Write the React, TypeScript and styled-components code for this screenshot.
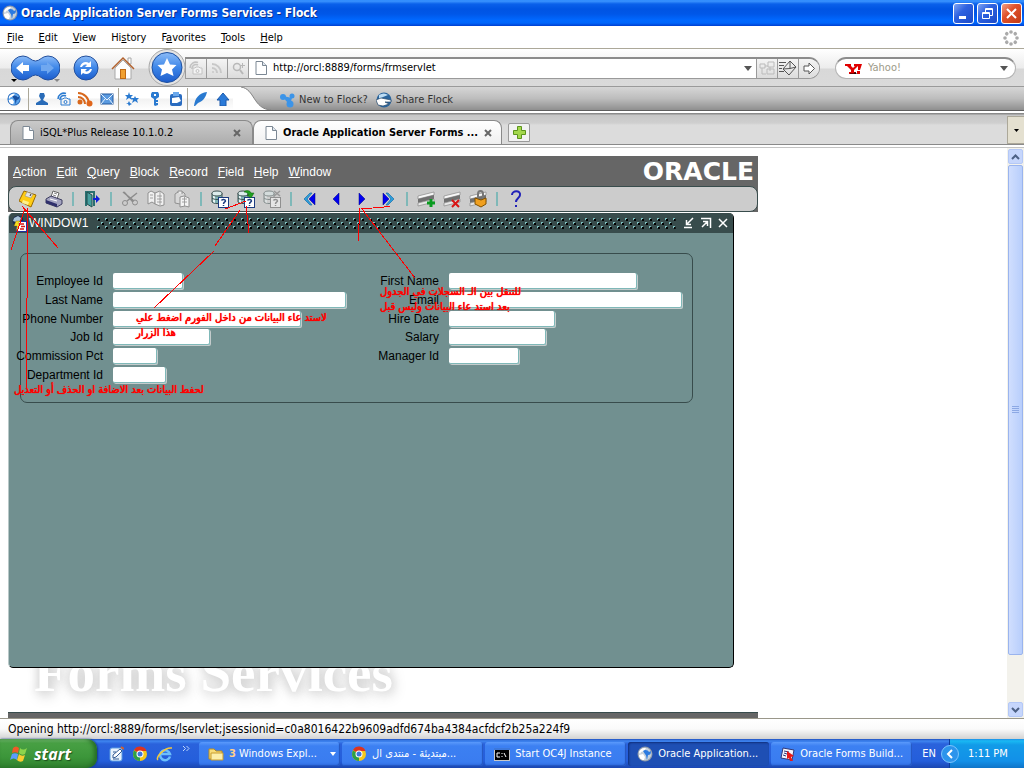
import React from "react";
import styled, { createGlobalStyle } from "styled-components";

const ui = `"DejaVu Sans Condensed", "DejaVu Sans", sans-serif`;
const forms = `"Liberation Sans", Arial, sans-serif`;

const Global = createGlobalStyle`
  * { box-sizing: border-box; }
  body { margin: 0; background: #fff; font: 11px/14px ${ui}; color: #000; }
  button, input { font: inherit; color: inherit; margin: 0; padding: 0; border: 0; background: none; border-radius: 0; outline: none; }
  a { color: inherit; text-decoration: none; }
  svg { display: block; flex: none; }
`;

const Screen = styled.div`
  display: flex;
  flex-direction: column;
  height: 100vh;
  min-height: 700px;
  overflow: hidden;
`;

/* ---------- browser chrome ---------- */

const TitleBar = styled.header`
  flex: none;
  height: 26px;
  display: flex;
  align-items: center;
  gap: 3px;
  padding: 0 2px;
  background: linear-gradient(#2a86fb 0, #3c95ff 1px, #0a60ea 4px, #0054e3 9px, #0057e8 14px, #0068ff 20px, #0066fb 23px, #003fd0 26px);
`;

const Title = styled.h1`
  flex: 1;
  margin: 0;
  font: bold 12px/16px ${ui};
  color: #fff;
  text-shadow: 1px 1px 0 #0b2f8a;
`;

const CaptionButton = styled.button<{ $close?: boolean }>`
  width: 21px;
  height: 21px;
  display: grid;
  place-items: center;
  border: 1px solid #fff;
  border-radius: 3px;
  background: ${(p) =>
    p.$close
      ? "linear-gradient(135deg, #f0a088, #e0522c 40%, #c23a14)"
      : "linear-gradient(135deg, #7fa4f4, #2f62e0 40%, #1c4ac8)"};
`;

const MenuBar = styled.nav`
  flex: none;
  height: 23px;
  display: flex;
  align-items: center;
  gap: 15px;
  padding: 1px 5px 0 7px;
  border-bottom: 1px solid #aca899;
`;

const MenuItem = styled.button`
  &::first-letter { text-decoration: underline; }
`;

const Spacer = styled.div`
  flex: 1;
`;

const NavBar = styled.div`
  flex: none;
  height: 38px;
  display: flex;
  align-items: center;
  padding: 0 8px 0 11px;
  border-bottom: 1px solid #9a9a9a;
  background: linear-gradient(#fff 0, #ececec 19px, #d8d8d8 20px, #dadada 100%);
`;

const RoundButton = styled.button<{ $before?: number }>`
  flex: none;
  margin-left: ${(p) => p.$before ?? 0}px;
  position: relative;
`;

const AddressBox = styled.div`
  flex: 1;
  min-width: 0;
  height: 22px;
  display: flex;
  align-items: stretch;
  margin-left: -2px;
  border: 1px solid #9a9a9a;
  border-top: 2px solid #8c8c8c;
  border-left: 0;
  border-radius: 0 11px 11px 0;
  background: #fff;
  overflow: hidden;
`;

const AddressButton = styled.button<{ $dim?: boolean }>`
  flex: none;
  width: 21px;
  display: grid;
  place-items: center;
  background: linear-gradient(#f4f4f4, #dcdcdc);
  border-left: 1px solid #9a9a9a;
  color: ${(p) => (p.$dim ? "#c2c2c2" : "#555")};
`;

const AddressIcon = styled.span`
  flex: none;
  width: 25px;
  display: grid;
  place-items: center;
  border-left: 1px solid #9a9a9a;
`;

const TextBox = styled.input`
  flex: 1;
  min-width: 0;
  &::placeholder { color: #9d9a88; opacity: 1; }
`;

const DropButton = styled.button`
  width: 17px;
  display: grid;
  place-items: center;
`;

const SearchBox = styled.div`
  flex: none;
  width: 181px;
  height: 22px;
  display: flex;
  align-items: center;
  gap: 6px;
  margin-left: 15px;
  padding: 0 3px 0 9px;
  border: 1px solid #b4b4b4;
  border-top: 2px solid #8c8c8c;
  border-radius: 11px;
  background: #fff;
`;

const ShelfBar = styled.div`
  flex: none;
  height: 24px;
  display: flex;
  align-items: stretch;
  border-bottom: 1px solid #5e5e5e;
  background: linear-gradient(#d6d6d6, #bdbdbd 50%, #8f8f8f);
`;

const ShelfIcons = styled.div`
  display: flex;
  align-items: center;
  background: linear-gradient(#fff 0, #fff 11px, #f2f2f2 12px, #fff 100%);
`;

const ShelfButton = styled.button<{ $w: number }>`
  width: ${(p) => p.$w}px;
  display: grid;
  place-items: center;
`;

const ShelfRule = styled.span`
  width: 1px;
  height: 22px;
  background: #aca899;
`;

const ShelfLink = styled.a`
  display: flex;
  align-items: center;
  gap: 4px;
  margin-left: 8px;
  padding-top: 3px;
  color: #333;
`;

const TabStrip = styled.div`
  flex: none;
  height: 34px;
  display: flex;
  align-items: flex-end;
  padding-left: 10px;
  border-top: 2px solid #fff;
  border-bottom: 1px solid #8a8a8a;
  background: linear-gradient(#8a8a8a 0, #8a8a8a 1px, #c6c6c6 2px, #cfcfcf 10px, #dcdcdc 12px, #dcdcdc 100%);
`;

const Tab = styled.button<{ $active?: boolean }>`
  width: ${(p) => (p.$active ? 249 : 243)}px;
  height: 24px;
  display: flex;
  align-items: center;
  gap: 6px;
  padding: 0 11px;
  border: 1px solid #8a8a8a;
  border-bottom: 0;
  border-radius: 8px 8px 0 0;
  font-weight: ${(p) => (p.$active ? "bold" : "normal")};
  background: ${(p) => (p.$active ? "linear-gradient(#fff, #f0f0f0)" : "linear-gradient(#c9c9c9, #adadad)")};
`;

const TabLabel = styled.span`
  flex: 1;
  text-align: left;
  white-space: nowrap;
`;

const NewTab = styled.button`
  align-self: center;
  width: 22px;
  height: 19px;
  margin: 7px 0 0 6px;
  display: grid;
  place-items: center;
  border: 1px solid #9a9a9a;
  border-radius: 2px 2px 0 0;
  background: #f2f2f2;
`;

const TabMenu = styled.button`
  width: 17px;
  height: 28px;
  display: grid;
  place-items: center;
  border: 1px solid #aca899;
  border-right: 0;
  background: #e4e0d0;
`;

/* ---------- page area ---------- */

const PageArea = styled.main`
  flex: 1;
  min-height: 0;
  display: flex;
  border-top: 1px solid #c4c4c4;
  margin-top: 2px;
`;

const Page = styled.div`
  flex: 1;
  min-width: 0;
  display: flex;
  padding: 8px 8px 0;
  overflow: hidden;
`;

const Applet = styled.section`
  position: relative;
  flex: 1;
  max-width: 750px;
  display: flex;
  flex-direction: column;
  font: 12px/14px ${forms};
`;

const AppletMenu = styled.nav`
  flex: none;
  height: 30px;
  display: flex;
  align-items: center;
  gap: 10px;
  padding: 1px 4px 0 5px;
  color: #fff;
  background: #666;
`;

const OracleLogo = styled.span`
  font: bold 25px/26px "DejaVu Sans", sans-serif;
`;

const ToolbarBack = styled.div`
  flex: none;
  background: #666;
`;

const Toolbar = styled.div`
  height: 26px;
  display: flex;
  align-items: center;
  padding-left: 6px;
  border: 1px solid #384c4c;
  border-radius: 8px;
  background: #ccc;
`;

const ToolButton = styled.button`
  flex: none;
  width: 26px;
  height: 22px;
  display: grid;
  place-items: center;
`;

const ToolRule = styled.span`
  flex: none;
  width: 2px;
  height: 14px;
  margin: 0 5px;
  background: #7fb8b8;
`;

const FormWindow = styled.section`
  flex: 1;
  min-height: 0;
  display: flex;
  flex-direction: column;
  margin: 1px 24px 0 0;
  border: solid #000;
  border-width: 0 1px 1px 0;
  border-left: 1px solid #b8c8c8;
  border-radius: 5px;
  background: #719090;
  overflow: hidden;
`;

const WindowTitle = styled.div`
  flex: none;
  height: 20px;
  display: flex;
  align-items: center;
  gap: 2px;
  padding: 0 3px;
  color: #fff;
  background: #384c4c;
`;

const WindowName = styled.h2`
  margin: 0 6px 0 0;
  font: 12px/14px ${forms};
`;

const Grip = styled.svg`
  flex: 1;
  min-width: 0;
  height: 12px;
  margin-right: 3px;
`;

const WindowButton = styled.button`
  width: 15px;
  display: grid;
  place-items: center;
`;

const Record = styled.form`
  margin: 20px 40px 0 11px;
  height: 150px;
  display: flex;
  align-items: flex-start;
  gap: 12px;
  padding: 18px 0 0;
  border: 1px solid #384c4c;
  border-radius: 7px;
`;

const FieldColumn = styled.div<{ $label: number }>`
  height: 112px;
  display: grid;
  grid-template-columns: ${(p) => p.$label}px 233px;
  grid-template-rows: repeat(6, 1fr);
  column-gap: 10px;
  align-items: center;
`;

const FieldLabel = styled.label`
  justify-self: end;
  white-space: nowrap;
`;

const Field = styled.input<{ $w: number }>`
  width: ${(p) => p.$w}px;
  height: 16px;
  padding: 0 3px;
  background: #fff;
  border: solid #7fb8b8;
  border-width: 0 1px 1px 0;
  border-radius: 2px;
  box-shadow: 1px 1px 0 #c4cccc;
`;

const Brand = styled.div`
  flex: none;
  height: 44px;
  display: flex;
  align-items: flex-end;
  padding: 0 0 11px 26px;
  overflow: hidden;
  font: bold 55px/56px "Liberation Serif", serif;
  color: #fff;
  text-shadow: 0 0 10px #d4d4d4, 2px 4px 14px #c8c8c8;
`;

const AppletFoot = styled.div`
  flex: none;
  height: 6px;
  background: #666;
  border-top: 1px solid #384c4c;
`;

const Lines = styled.svg`
  position: absolute;
  left: 0;
  top: 0;
  pointer-events: none;
`;

const Note = styled.p<{ $x: number; $y: number }>`
  position: absolute;
  left: ${(p) => p.$x}px;
  top: ${(p) => p.$y}px;
  margin: 0;
  direction: rtl;
  white-space: nowrap;
  font: 11px/15px ${ui};
  color: #f00;
  text-shadow: 0 0 0 #f00, 0 0 1px #f00;
`;

const ScrollBar = styled.div`
  flex: none;
  width: 17px;
  display: flex;
  flex-direction: column;
  gap: 1px;
  padding: 1px;
  background: #f3f2ec;
`;

const ScrollButton = styled.button`
  height: 15px;
  display: grid;
  place-items: center;
  border: 1px solid #b4c8f6;
  border-radius: 2px;
  background: #c6d6fc;
`;

const ScrollThumb = styled.div`
  flex: 491;
  display: grid;
  place-items: center;
  border: 1px solid #9ab4ee;
  border-radius: 2px;
  background: linear-gradient(90deg, #d0defe, #b8cefc);
`;

const ScrollTrack = styled.div`
  flex: 45;
`;

const StatusBar = styled.div`
  flex: none;
  height: 21px;
  display: flex;
  align-items: center;
  padding-left: 8px;
  border-top: 1px solid #9a978a;
  background: linear-gradient(#fff, #fafafa 50%, #d2d2d2);
  font-size: 12px;
`;

/* ---------- task bar ---------- */

const TaskBar = styled.footer`
  flex: none;
  height: 29px;
  display: flex;
  align-items: stretch;
  color: #fff;
  background: linear-gradient(#1f4fc0 0, #3f86f0 2px, #2a62dc 5px, #245edb 22px, #1b46b0 29px);
`;

const StartButton = styled.button`
  width: 97px;
  display: flex;
  align-items: center;
  gap: 6px;
  padding-left: 10px;
  border-radius: 0 10px 10px 0;
  background: linear-gradient(#7cc478 0, #48a044 4px, #3c963a 18px, #2f802e 29px);
  box-shadow: inset -3px 0 4px #256b25, 1px 0 2px #14388c;
  font: italic bold 16px/20px "Open Sans", sans-serif;
  text-shadow: 1px 1px 1px #1c4f1c;
`;

const QuickLaunch = styled.div`
  width: 102px;
  display: flex;
  align-items: center;
  gap: 8px;
  padding-left: 11px;
`;

const More = styled.svg`
  align-self: flex-start;
  margin-top: 6px;
`;

const Tasks = styled.div`
  flex: 1;
  min-width: 0;
  display: grid;
  grid-template-columns: repeat(5, 1fr);
  gap: 2px;
  padding: 3px 0 2px;
`;

const Task = styled.button<{ $active?: boolean }>`
  min-width: 0;
  display: flex;
  align-items: center;
  gap: 5px;
  padding: 0 4px 0 9px;
  border-radius: 3px;
  white-space: nowrap;
  background: ${(p) => (p.$active ? "#1e4fb4" : "linear-gradient(#5a9afc, #3c80f2 4px, #3a7cf0 20px, #2f6ce0)")};
  box-shadow: ${(p) => (p.$active ? "inset 1px 1px 2px #102f7c" : "inset -1px -1px 1px #2456c0")};
`;

const TaskText = styled.span`
  flex: 1;
  min-width: 0;
  text-align: left;
  overflow: hidden;
`;

const Count = styled.b`
  color: #ffcf8c;
`;

const Tray = styled.div`
  display: flex;
  align-items: center;
`;

const Language = styled.button`
  padding: 0 5px 0 10px;
`;

const TrayToggle = styled.button`
  position: relative;
  z-index: 1;
`;

const Clock = styled.time`
  align-self: stretch;
  width: 75px;
  display: flex;
  align-items: center;
  padding-left: 18px;
  margin-left: -10px;
  border-left: 1px solid #0c3c9c;
  background: linear-gradient(#1f90e8 0, #19b9f3 2px, #129be8 6px, #1290e8 22px, #0f74c8 29px);
`;

/* ---------- drawings ---------- */

const Globe = ({ s = 16, blue }: { s?: number; blue?: boolean }) => (
  <svg width={s} height={s} viewBox="0 0 16 16">
    <circle cx="8" cy="8" r="7.500" fill={blue ? "#2c6cbc" : "#8c98a8"} />
    <circle cx="8" cy="8" r="6.500" fill={blue ? "#5ca4ec" : "#c4d0dc"} />
    <path d="M2 6C3 3 6 1.500 9 2L7 5L4 6L3 8Z" fill="#fff" />
    <path d="M6 5C8 3 11 4 12 6L14 5C14 8 13 9 11 9L10 14C9 12 10 10 8 8Z" fill={blue ? "#1850a0" : "#2b7ae0"} />
    <path d="M2 9L6 8L8 11L7 14C4 14 2 12 2 9Z" fill="#fff" />
  </svg>
);

const Caret = ({ c = "#555" }: { c?: string }) => (
  <svg width="8" height="5" viewBox="0 0 8 5"><path d="M0 0H8L4 5Z" fill={c} /></svg>
);

const SmallCaret = () => (
  <svg width="6" height="4" viewBox="0 0 6 4"><path d="M0 0H6L3 4Z" fill="#fff" /></svg>
);

const PageIcon = () => (
  <svg width="12" height="14" viewBox="0 0 12 14">
    <path d="M1 .5H7.500L11.500 4.500V13.500H1Z" fill="#fff" stroke="#7c8894" />
    <path d="M7.500 .5V4.500H11.500" fill="#dfe6ee" stroke="#7c8894" />
  </svg>
);

const Cross = () => (
  <svg width="8" height="8" viewBox="0 0 8 8"><path d="M1 1L7 7M7 1L1 7" stroke="#666" strokeWidth="2" /></svg>
);

const BlueDefs = () => (
  <defs>
    <linearGradient id="blue" x1="0" y1="0" x2="0" y2="1">
      <stop offset="0" stopColor="#8cbcf8" />
      <stop offset=".5" stopColor="#3d86e8" />
      <stop offset="1" stopColor="#1c5ccc" />
    </linearGradient>
  </defs>
);

const BackForward = () => (
  <svg width="49" height="30" viewBox="0 0 49 30">
    <BlueDefs />
    <path d="M12 3C18 3 20 8 24.500 8S31 3 37 3A12 12 0 0 1 37 27C31 27 29 22 24.500 22S18 27 12 27A12 12 0 0 1 12 3Z" fill="url(#blue)" stroke="#24509c" />
    <path d="M5 15L12 9V12H18V18H12V21Z" fill="#fff" />
    <path d="M43 15L36 9V12H30V18H36V21Z" fill="#70a8f0" />
    <path d="M0 26H6L3 29Z" fill="#000" /><path d="M43 26H49L46 29Z" fill="#888" />
  </svg>
);

const Reload = () => (
  <svg width="26" height="26" viewBox="0 0 26 26">
    <circle cx="13" cy="13" r="12" fill="url(#blue)" stroke="#24509c" />
    <path d="M7 12C8 7 13 6 16 8L18 6V12H12L14 10C12 9 10 10 9 12ZM19 14C18 19 13 20 10 18L8 20V14H14L12 16C14 17 16 16 17 14Z" fill="#fff" />
  </svg>
);

const Home = () => (
  <svg width="24" height="24" viewBox="0 0 24 24">
    <path d="M17 2H20V8H17Z" fill="#fff" stroke="#a8a8a8" />
    <path d="M4 12L12 4L20 12V23H4Z" fill="#fdfdfd" stroke="#a8a8a8" />
    <path d="M1 13L12 2L23 13" fill="none" stroke="#b0602c" strokeWidth="1.500" />
    <rect x="9.500" y="13.500" width="5" height="9" fill="#f0a030" stroke="#c06a14" />
  </svg>
);

const Star = () => (
  <svg width="40" height="37" viewBox="0 0 40 37">
    <circle cx="20" cy="18.500" r="18" fill="#e4e4e4" stroke="#a8a8a8" />
    <circle cx="20" cy="18.500" r="15" fill="url(#blue)" stroke="#1d4f9f" />
    <path d="M20 9L23 15.500L29.500 16L25 20.500L26.500 27L20 24L13.500 27L15 20.500L10.500 16L17 15.500Z" fill="#fff" />
  </svg>
);

const Feed = ({ c, s = 12 }: { c: string; s?: number }) => (
  <svg width={s} height={s} viewBox="0 0 12 12" fill="none" stroke={c} strokeWidth="2">
    <path d="M1 2A9 9 0 0 1 10 11M1 6A5 5 0 0 1 6 11" /><circle cx="2" cy="10" r="1" fill={c} stroke="none" />
  </svg>
);

const Media = ({ c }: { c: string }) => (
  <svg width="14" height="14" viewBox="0 0 14 14" fill="none" stroke={c}>
    <path d="M1 7A6 6 0 0 1 9 1.500M3 8A4 4 0 0 1 9 4" strokeWidth="1.500" />
    <path d="M4 7H6L7 6H10L11 7H13V13H4Z" fill="#f4f4f4" /><circle cx="8.500" cy="10" r="1.500" />
  </svg>
);

const Yahoo = () => (
  <svg width="17" height="11" viewBox="0 0 17 11">
    <path d="M0 1H6V3L8 5L10 3H9V1H13V3L9 7V9H11V11H4V9H6V7L2 3H0Z" fill="#e00000" />
    <path d="M13 1H17L15 7H13ZM12 8H15V11H12Z" fill="#e00000" /><path d="M9 10H11V11H5" stroke="#000" fill="none" />
  </svg>
);

const Throbber = () => (
  <svg width="16" height="16" viewBox="0 0 16 16" fill="#aaa">
    {[0, 45, 90, 135, 180, 225, 270, 315].map((a) => (
      <circle key={a} cx="8" cy="2" r="1.800" transform={`rotate(${a} 8 8)`} />
    ))}
  </svg>
);

const shelf: { [k: string]: React.ReactNode } = {
  person: <path d="M5 1H9L10 4L8 8L13 11V13H1V11L6 8L4 4Z" fill="#2a6cb8" />,
  mail: <g><rect x="1" y="2" width="12" height="10" fill="#5a9ae0" stroke="#24589c" /><path d="M1 2L7 8L13 2M1 12L5 7M13 12L9 7" fill="none" stroke="#e8f2fc" /></g>,
  stars: <path d="M4 0L5 3L8 3L6 5L7 8L4 6L1 8L2 5L0 3H3ZM10 4L11 6H14L12 8L13 11L10 9L7 11L8 8L6 6H9ZM4 9L5 11L7 12L5 13L4 14L3 12L1 11H3Z" fill="#2a7ad0" />,
  key: <path d="M4 0H10L11 2V5L8 7V8H10V10H8V11H10V13L7 14L6 13V7L3 5V2ZM6 2V4H8V2Z" fill="#2a7ad0" fillRule="evenodd" />,
  clip: <g><rect x="1" y="2" width="12" height="12" rx="2" fill="#2a6cc0" /><rect x="4" y="0" width="6" height="4" fill="#6aa8ec" /><path d="M3 6L10 5L12 9L8 11H3Z" fill="#fff" /></g>,
  quill: <path d="M1 14C2 6 6 1 14 0C13 4 11 9 5 11L2 14Z" fill="#2a7ad0" />,
  up: <path d="M7 1L13 8H10V14H4V8H1Z" fill="#2a7ad8" stroke="#1c5aac" />,
};

const Shelf = ({ name }: { name: string }) => (
  <svg width="14" height="14" viewBox="0 0 14 14">{shelf[name]}</svg>
);

const FeedBig = () => (
  <svg width="16" height="16" viewBox="0 0 16 16" fill="none" stroke="#d8681c" strokeWidth="2">
    <path d="M1 2A11 11 0 0 1 12 13M1 6A7 7 0 0 1 8 13" /><circle cx="3" cy="11" r="1.500" fill="#d8681c" /><circle cx="12.500" cy="12.500" r="3" fill="#e0661c" stroke="none" />
  </svg>
);

const database = (c: string) => (
  <g>
    <path d="M1 3V12C3 14 9 14 11 12V3" fill={c} stroke="#3c5050" />
    <path d="M2 5V12L4 13V6Z" fill="#e8f4f4" />
    <ellipse cx="6" cy="3.500" rx="5" ry="2.500" fill="#dcecec" stroke="#3c5050" />
    <path d="M1 8C3 10 9 10 11 8" fill="none" stroke="#3c5050" />
  </g>
);
const ask = (c: string) => (
  <g>
    <rect x="7.500" y="7.500" width="10" height="10" fill="#fff" stroke={c} />
    <path d="M10.500 10.500C11 9 14.500 9 14.500 11C14.500 12 12.500 12 12.500 14M12.500 15V16" fill="none" stroke={c} strokeWidth="1.500" />
  </g>
);
const rows = (
  <g>
    <path d="M1 6L17 2V5L1 9Z" fill="#f8f8f8" stroke="#888" strokeWidth=".7" />
    <path d="M1 9L17 5V9L1 13Z" fill="#707070" /><path d="M1 13L17 9V12L1 16Z" fill="#e8e8e8" stroke="#888" strokeWidth=".7" />
  </g>
);

const tools: { [k: string]: React.ReactNode } = {
  Save: <g><path d="M5 1L17 5L12 17L0 11Z" fill="#ffcc14" stroke="#9a6a00" /><path d="M8 2L14 4L12 8L6 6Z" fill="#e4e4e4" stroke="#888" strokeWidth=".5" /><path d="M12 4L11 6" stroke="#333" /><path d="M4 10L10 12L9 15L3 13Z" fill="#fff08c" /></g>,
  Print: <g><path d="M8 1L14 3L12 9L6 7Z" fill="#fff" stroke="#666" /><path d="M9 3L12 4M8 5L11 6" stroke="#888" /><path d="M1 9L6 6L17 10V14L12 17L1 13Z" fill="#a4a4c0" stroke="#3c3c60" /><path d="M1 10L12 14V17L1 13Z" fill="#30306c" /><path d="M5 9L12 11" stroke="#fff" /></g>,
  Exit: <g><path d="M2 1H12V16H10V3H4V16H2Z" fill="#2a7070" /><path d="M4 2L9 5V17L4 14Z" fill="#48a0a0" stroke="#205050" /><path d="M10 8H13V5L17 9L13 13V10H10Z" fill="#1020d8" /></g>,
  Cut: <g fill="none" stroke="#8c8c8c"><path d="M2 2L13 11M3 2L12 12M16 3L6 11" strokeWidth="1.500" /><circle cx="4" cy="13" r="2.500" /><circle cx="14" cy="12.500" r="2.500" /></g>,
  Copy: <g fill="#f0f0f0" stroke="#909090"><path d="M1 3L4 1L8 3V14L5 12L1 14Z" /><path d="M8 3L13 1L17 4V15L13 16L8 14Z" /><path d="M3 5H6M3 8H6M10 6H15M10 9H15M10 12H15M13 2V15" strokeWidth=".8" /></g>,
  Paste: <g fill="#d8d8d8" stroke="#909090"><path d="M2 4L5 2H10L12 4V15L2 13Z" /><path d="M5 3V1H9V4" fill="#eee" /><path d="M7 7L11 6L16 8V17L12 16L7 17Z" fill="#f4f4f4" /><path d="M9 9H14M9 12H14M11.500 7V16" strokeWidth=".8" /></g>,
  "Enter query": <g>{database("#80b4b4")}{ask("#1c3c80")}</g>,
  "Execute query": <g>{database("#80b4b4")}{ask("#1c3c80")}<path d="M7 2C9 0 13 0 14 3H17L14 8L10 5H12C11 3 9 2 7 2Z" fill="#20a020" stroke="#086008" strokeWidth=".5" /></g>,
  "Cancel query": <g opacity=".5">{database("#d0d0d0")}{ask("#555")}<path d="M11 1L17 6M17 1L11 6" stroke="#666" strokeWidth="1.500" /></g>,
  "Previous block": <g><path d="M9 3H11L6 9L11 15H9L3 9Z" fill="#2ca0dc" stroke="#1c6ca8" strokeWidth=".7" /><path d="M14 3V15L8 9Z" fill="#0000f0" stroke="#000080" strokeWidth=".5" /></g>,
  "Previous record": <path d="M12 3V15L6 9Z" fill="#0000f0" stroke="#000080" strokeWidth=".5" />,
  "Next record": <path d="M6 3V15L12 9Z" fill="#0000f0" stroke="#000080" strokeWidth=".5" />,
  "Next block": <g><path d="M7 3H9L15 9L9 15H7L12 9Z" fill="#2ca0dc" stroke="#1c6ca8" strokeWidth=".7" /><path d="M4 3V15L10 9Z" fill="#0000f0" stroke="#000080" strokeWidth=".5" /></g>,
  "Insert record": <g>{rows}<path d="M10 13H18M14 9V17" stroke="#0a9a20" strokeWidth="3" /></g>,
  "Remove record": <g>{rows}<path d="M9 10L16 17M16 10L9 17" stroke="#d81414" strokeWidth="2" /></g>,
  "Lock record": <g>{rows}<path d="M9 9V4C9 0 14 0 14 4V9" fill="none" stroke="#777" strokeWidth="2" /><path d="M6 8L12 10L17 8V14L12 17L6 14Z" fill="#f0a020" stroke="#805000" /></g>,
  Help: <path d="M5 5C5 0 14 0 13 5C13 8 9 8 9 12M9 15V17" fill="none" stroke="#2020b8" strokeWidth="2" />,
};

const toolOrder = [
  "Save", "Print", "|", "Exit", "|", "Cut", "Copy", "Paste", "|", "Enter query", "Execute query", "Cancel query", "|",
  "Previous block", "Previous record", "Next record", "Next block", "|", "Insert record", "Remove record", "Lock record", "|", "Help",
];

const Chrome = () => (
  <svg width="16" height="16" viewBox="0 0 16 16">
    <circle cx="8" cy="8" r="7" fill="#f4c81c" />
    <path d="M8 8L2 4A7 7 0 0 1 14.500 5H8Z" fill="#dc3420" /><path d="M8 8L8 15A7 7 0 0 1 2 4.500Z" fill="#2ca048" />
    <circle cx="8" cy="8" r="3.500" fill="#fff" /><circle cx="8" cy="8" r="2.500" fill="#3c78dc" />
  </svg>
);

const Flag = () => (
  <svg width="18" height="18" viewBox="0 0 18 18">
    <path d="M3 3C5 1 7 1 9 3L8 8C6 7 4 7 2 8Z" fill="#f05a28" /><path d="M10 3C12 5 14 5 17 3L15 9C13 10 11 10 9 8Z" fill="#8cd44c" />
    <path d="M2 9C4 8 6 8 8 9L7 15C5 13 3 13 0 15Z" fill="#5c9cfc" /><path d="M9 9C11 11 13 11 15 10L13 16C11 17 9 17 7 15Z" fill="#f8cc30" />
  </svg>
);

const Desktop = () => (
  <svg width="16" height="16" viewBox="0 0 16 16">
    <rect x="2" y="2" width="12" height="13" rx="2" fill="#e8f2fc" stroke="#5c9ce0" /><path d="M5 9L12 3L14 5L8 11L5 12Z" fill="#fff" stroke="#345c94" /><path d="M5 6H8M5 13H11" stroke="#345c94" /><path d="M13 1L16 3" stroke="#d06030" strokeWidth="2" />
  </svg>
);

const Explorer = () => (
  <svg width="18" height="16" viewBox="0 0 18 16" fill="none">
    <path d="M14 10.500A5 5 0 1 1 14 8H5" stroke="#6cc0fc" strokeWidth="2.500" /><path d="M2 14C-1 12 8 1 16 2" stroke="#f4c83c" strokeWidth="1.500" />
  </svg>
);

const Folder = () => (
  <svg width="16" height="14" viewBox="0 0 16 14"><path d="M1 2H6L8 4H14V12H1Z" fill="#f8dc78" stroke="#b88c20" /><path d="M3 6H15V13H3Z" fill="#fceeaa" stroke="#c89c30" /></svg>
);

const Terminal = () => (
  <svg width="16" height="13" viewBox="0 0 16 13"><path d="M0 0H16V13H0Z" fill="#c8c8c8" /><path d="M0 0H16V2H0Z" fill="#3c78dc" /><path d="M1 2H15V12H1Z" fill="#000" /><path d="M6 5H3V9H6M8 5V6M8 8V9M10 5L12 9" stroke="#fff" fill="none" /></svg>
);

const Builder = () => (
  <svg width="15" height="15" viewBox="0 0 15 15"><path d="M3 1L14 3L12 13L1 11Z" fill="#f4f4fc" stroke="#303878" /><path d="M4 4L9 5M4 6L7 7M3 8L6 9" stroke="#303878" /><path d="M7 4L14 9L11 10L13 14L10 14L9 11L7 12Z" fill="#e81818" /></svg>
);

const Applogo = () => (
  <svg width="15" height="17" viewBox="0 0 15 17">
    <circle cx="6" cy="6" r="5.500" fill="#1c2c50" /><path d="M2 3L6 1L9 3L8 6L4 7L1 6Z" fill="#a8c4d8" />
    <rect x="4.500" y="6.500" width="10" height="10" fill="#fff" stroke="#2030a0" />
    <path d="M8 9H12M9 11.500H13M8 14H12" stroke="#d81414" strokeWidth="1.500" />
    <path d="M4 6L2 11H5L4 16L8 9H6L8 6Z" fill="#f8e020" stroke="#806000" strokeWidth=".4" />
  </svg>
);

const Chevron = ({ down }: { down?: boolean }) => (
  <svg width="9" height="6" viewBox="0 0 9 6"><path d={down ? "M1 1L4.500 4.500L8 1" : "M1 5L4.500 1.500L8 5"} fill="none" stroke="#4d6185" strokeWidth="2" /></svg>
);

/* ---------- data ---------- */

const left: [string, number][] = [
  ["Employee Id", 70], ["Last Name", 233], ["Phone Number", 188], ["Job Id", 97], ["Commission Pct", 44], ["Department Id", 53],
];
const right: [string, number][] = [
  ["First Name", 188], ["Email", 233], ["Hire Date", 106], ["Salary", 97], ["Manager Id", 70],
];

const Fields = ({ items, label }: { items: [string, number][]; label: number }) => (
  <FieldColumn $label={label}>
    {items.map(([name, w]) => (
      <React.Fragment key={name}>
        <FieldLabel htmlFor={name.replace(" ", "-")}>{name}</FieldLabel>
        <Field id={name.replace(" ", "-")} $w={w} />
      </React.Fragment>
    ))}
  </FieldColumn>
);

const Key = ({ text, at = 0 }: { text: string; at?: number }) => (
  <span>{text.slice(0, at)}<u>{text[at]}</u>{text.slice(at + 1)}</span>
);

export default function App() {
  return (
    <Screen>
      <Global />
      <TitleBar>
        <Globe />
        <Title>Oracle Application Server Forms Services - Flock</Title>
        <CaptionButton aria-label="Minimize"><svg width="13" height="13"><path d="M2 9H9V12H2Z" fill="#fff" /></svg></CaptionButton>
        <CaptionButton aria-label="Restore"><svg width="13" height="13" fill="none" stroke="#fff"><path d="M1.500 5.500H8.500V11.500H1.500ZM1 6.500H9M4.500 5V1.500H11.500V8.500H9M4 2.500H12" /></svg></CaptionButton>
        <CaptionButton $close aria-label="Close"><svg width="13" height="13"><path d="M2 2L11 11M11 2L2 11" stroke="#fff" strokeWidth="2" /></svg></CaptionButton>
      </TitleBar>

      <MenuBar>
        <MenuItem>File</MenuItem><MenuItem>Edit</MenuItem><MenuItem>View</MenuItem>
        <button><Key text="History" at={2} /></button>
        <button><Key text="Favorites" at={1} /></button>
        <MenuItem>Tools</MenuItem><MenuItem>Help</MenuItem>
        <Spacer /><Throbber />
      </MenuBar>

      <NavBar>
        <RoundButton aria-label="Back and forward"><BackForward /></RoundButton>
        <RoundButton $before={13} aria-label="Reload"><Reload /></RoundButton>
        <RoundButton $before={12} aria-label="Home"><Home /></RoundButton>
        <RoundButton $before={12} aria-label="Favorite"><Star /></RoundButton>
        <AddressBox>
          <AddressButton $dim aria-label="Media"><Media c="#c2c2c2" /></AddressButton>
          <AddressButton $dim aria-label="Feeds"><Feed c="#c8c8c8" /></AddressButton>
          <AddressButton $dim aria-label="Find"><svg width="13" height="13" fill="none" stroke="#b8b8b8"><circle cx="5" cy="5" r="3.500" strokeWidth="1.500" /><path d="M8 8L11 12" strokeWidth="2" /><path d="M8 3.500H13M10.500 1V6" /></svg></AddressButton>
          <AddressIcon><PageIcon /></AddressIcon>
          <TextBox aria-label="Address" defaultValue="http://orcl:8889/forms/frmservlet" />
          <DropButton aria-label="Address history"><Caret /></DropButton>
          <AddressButton $dim aria-label="Share"><svg width="16" height="15" fill="none" stroke="#bbb"><path d="M1 3H6V7H1ZM9 1H15V6H9ZM3 7V13H7M8 8H15V13H8ZM6 5H9M11 6V10" /></svg></AddressButton>
          <AddressButton aria-label="Mail page"><svg width="18" height="16" fill="none" stroke="#555"><path d="M4 9L11 1L17 7L10 15ZM4 9L11 8.500L11 1M11 8.500L17 7M0 2.500H7M0 5.500H5M0 8.500H3M0 11.500H5" /></svg></AddressButton>
          <AddressButton aria-label="Go"><svg width="13" height="13" fill="#fff" stroke="#555"><path d="M1 4H6V1L11.500 6.500L6 12V9H1Z" /></svg></AddressButton>
        </AddressBox>
        <SearchBox>
          <Yahoo />
          <TextBox aria-label="Search" placeholder="Yahoo!" />
          <DropButton aria-label="Search engines"><Caret /></DropButton>
        </SearchBox>
      </NavBar>

      <ShelfBar>
        <ShelfIcons>
          <ShelfButton $w={28} aria-label="World"><Globe s={14} blue /></ShelfButton><ShelfRule />
          <ShelfButton $w={25} aria-label="People"><Shelf name="person" /></ShelfButton>
          <ShelfButton $w={20} aria-label="Media"><Media c="#2a7ad0" /></ShelfButton>
          <ShelfButton $w={22} aria-label="Feeds"><FeedBig /></ShelfButton>
          <ShelfButton $w={22} aria-label="Mail"><Shelf name="mail" /></ShelfButton><ShelfRule />
          <ShelfButton $w={26} aria-label="Favorites"><Shelf name="stars" /></ShelfButton>
          <ShelfButton $w={20} aria-label="Accounts"><Shelf name="key" /></ShelfButton>
          <ShelfButton $w={22} aria-label="Clipboard"><Shelf name="clip" /></ShelfButton><ShelfRule />
          <ShelfButton $w={24} aria-label="Blog"><Shelf name="quill" /></ShelfButton>
          <ShelfButton $w={21} aria-label="Upload"><Shelf name="up" /></ShelfButton>
        </ShelfIcons>
        <svg width="39" height="23" viewBox="0 0 39 23">
          <path d="M0 0H8C22 2 20 22 38 23H0Z" fill="#fff" /><path d="M8 0C22 2 20 22 38 23" fill="none" stroke="#808080" />
        </svg>
        <ShelfLink href="#new">
          <svg width="15" height="15" viewBox="0 0 15 15" fill="#3c94e8"><circle cx="3" cy="4" r="3" /><circle cx="12" cy="3" r="2.500" /><circle cx="10" cy="11" r="3.500" /><path d="M3 3L12 5L10 11L6 8Z" /></svg>
          New to Flock?
        </ShelfLink>
        <ShelfLink href="#share">
          <svg width="16" height="16" viewBox="0 0 16 16"><circle cx="8" cy="8" r="7.500" fill="#2a649c" /><path d="M3 3Q8 0 12 3L7 5L3 7Z" fill="#bcdcf4" /><path d="M0 8L5 6L15 8V10H9L13 12L7 14L2 13Z" fill="#fff" stroke="#2c4c6c" strokeWidth=".7" /></svg>
          Share Flock
        </ShelfLink>
      </ShelfBar>

      <TabStrip>
        <Tab><PageIcon /><TabLabel>iSQL*Plus Release 10.1.0.2</TabLabel><Cross /></Tab>
        <Tab $active><PageIcon /><TabLabel>Oracle Application Server Forms ...</TabLabel><Cross /></Tab>
        <NewTab aria-label="New tab"><svg width="13" height="13"><path d="M4.500 .5H8.500V4.500H12.500V8.500H8.500V12.500H4.500V8.500H.5V4.500H4.500Z" fill="#a4d84c" stroke="#5c941c" /></svg></NewTab>
        <Spacer />
        <TabMenu aria-label="List all tabs"><svg width="5" height="3"><path d="M0 0H5L2.500 3Z" /></svg></TabMenu>
      </TabStrip>

      <PageArea>
        <Page>
          <Applet>
            <AppletMenu>
              {["Action", "Edit", "Query", "Block", "Record", "Field", "Help", "Window"].map((m) => <MenuItem key={m}>{m}</MenuItem>)}
              <Spacer />
              <OracleLogo>ORACLE</OracleLogo>
            </AppletMenu>
            <ToolbarBack>
              <Toolbar>
                {toolOrder.map((t, i) =>
                  t === "|" ? <ToolRule key={i} /> : (
                    <ToolButton key={t} aria-label={t}><svg width="18" height="18" viewBox="0 0 18 18">{tools[t]}</svg></ToolButton>
                  )
                )}
              </Toolbar>
            </ToolbarBack>

            <FormWindow>
              <WindowTitle>
                <Applogo />
                <WindowName>WINDOW1</WindowName>
                <Grip>
                  <defs>
                    <pattern id="studs" width="8" height="8" patternUnits="userSpaceOnUse">
                      <path d="M2 2h2v2h-2zM6 6h2v2h-2z" fill="#000" /><path d="M1 1h2v1h-1v1h-1zM5 5h2v1h-1v1h-1z" fill="#7fc0c0" />
                    </pattern>
                  </defs>
                  <rect width="100%" height="12" fill="url(#studs)" />
                </Grip>
                <WindowButton aria-label="Minimize"><svg width="12" height="12" fill="none" stroke="#fff"><path d="M1 10.500H9M10 1L4 7M3.500 3V7.500H8" strokeWidth="1.500" /></svg></WindowButton>
                <WindowButton aria-label="Maximize"><svg width="12" height="12" fill="none" stroke="#fff"><path d="M1 1.500H10.500V11M2 10L7 5M3 4.500H7.500V9" strokeWidth="1.500" /></svg></WindowButton>
                <WindowButton aria-label="Close"><svg width="12" height="12"><path d="M2 2L10 10M10 2L2 10" stroke="#fff" strokeWidth="1.500" /></svg></WindowButton>
              </WindowTitle>
              <Record>
                <Fields items={left} label={82} />
                <Fields items={right} label={81} />
              </Record>
            </FormWindow>

            <Brand>Forms Services</Brand>
            <AppletFoot />

            <Lines width="750" height="562" viewBox="8 156 750 562" fill="none" stroke="#f00" shapeRendering="crispEdges">
              <path d="M25 208L11 250M22 206L58 248M27.500 208V298M26.500 298V388M246 201L225 209M240 210L215 246M214 251L154 308M246 206L249 233M390 206.500L361 209M359.500 208L358.500 241M362 209L415 278" />
            </Lines>
            <Note $x={372} $y={128}>للتنقل بين الـ السجلات في الجدول</Note>
            <Note $x={372} $y={143}>بعد استد عاء البيانات وليس قبل</Note>
            <Note $x={128} $y={154}>لاستد عاء البيانات من داخل الفورم اضغط علي</Note>
            <Note $x={128} $y={169}>هذا الزرار</Note>
            <Note $x={6} $y={226}>لحفط البيانات بعد الاضافة او الحذف أو التعديل</Note>
          </Applet>
        </Page>
        <ScrollBar>
          <ScrollButton aria-label="Scroll up"><Chevron /></ScrollButton>
          <ScrollThumb><svg width="7" height="8"><path d="M0 .5H7M0 2.500H7M0 4.500H7M0 6.500H7" stroke="#8ca8e4" /></svg></ScrollThumb>
          <ScrollTrack />
          <ScrollButton aria-label="Scroll down"><Chevron down /></ScrollButton>
        </ScrollBar>
      </PageArea>

      <StatusBar>Opening http://orcl:8889/forms/lservlet;jsessionid=c0a8016422b9609adfd674ba4384acfdcf2b25a224f9</StatusBar>

      <TaskBar>
        <StartButton><Flag />start</StartButton>
        <QuickLaunch>
          <Desktop /><Chrome /><Explorer />
          <More width="8" height="7" viewBox="0 0 8 7"><path d="M1 1L3.500 3.500L1 6M4.500 1L7 3.500L4.500 6" fill="none" stroke="#c0d8fc" /></More>
        </QuickLaunch>
        <Tasks>
          <Task><Folder /><TaskText><Count>3</Count> Windows Expl...</TaskText><SmallCaret /></Task>
          <Task><Chrome /><TaskText>مبتديئة - منتدى ال...</TaskText></Task>
          <Task><Terminal /><TaskText>Start OC4J Instance</TaskText></Task>
          <Task $active><Globe /><TaskText>Oracle Application...</TaskText></Task>
          <Task><Builder /><TaskText>Oracle Forms Build...</TaskText></Task>
        </Tasks>
        <Tray>
          <Language>EN</Language>
          <TrayToggle aria-label="Show hidden icons">
            <svg width="18" height="18" viewBox="0 0 18 18"><circle cx="9" cy="9" r="8.500" fill="#2c94ec" stroke="#7cc4fc" /><path d="M11 5L7 9L11 13" fill="none" stroke="#fff" strokeWidth="2" /></svg>
          </TrayToggle>
          <Clock>1:11 PM</Clock>
        </Tray>
      </TaskBar>
    </Screen>
  );
}
